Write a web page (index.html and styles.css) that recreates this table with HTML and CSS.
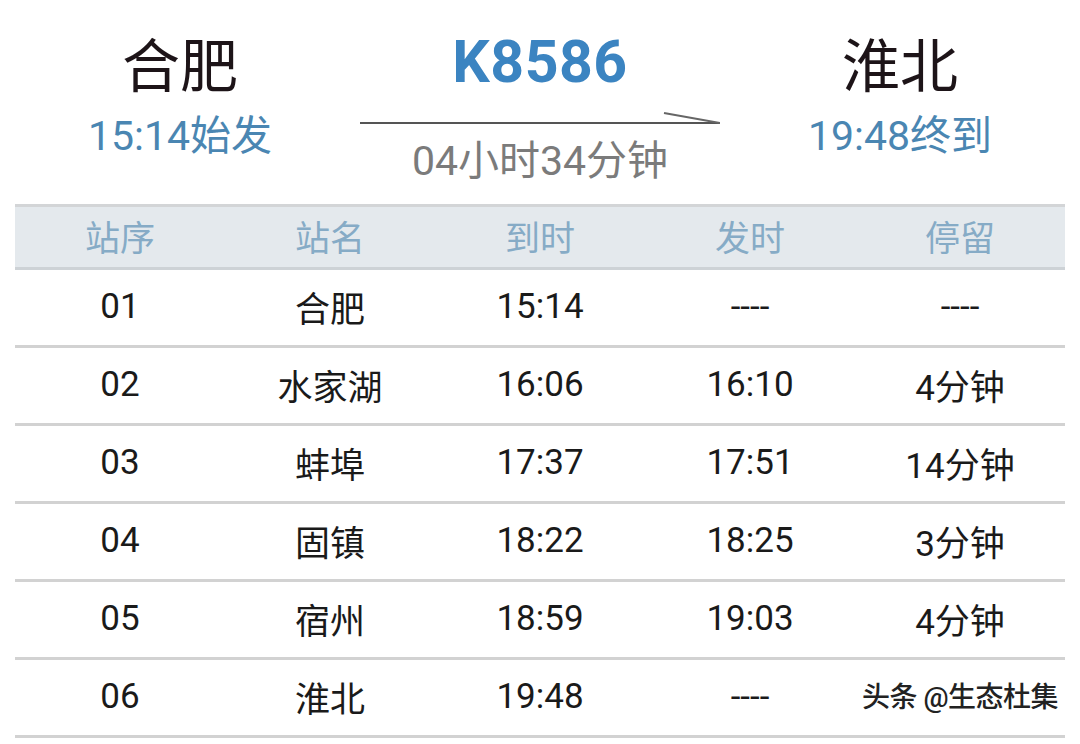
FILE: index.html
```html
<!DOCTYPE html>
<html lang="zh-CN">
<head>
<meta charset="utf-8">
<title>K8586</title>
<link rel="stylesheet" href="styles.css">
</head>
<body>
<div class="page">
  <div class="card">
    <div class="end">
      <div class="city">合肥</div>
      <div class="time">15:14始发</div>
    </div>
    <div class="mid">
      <div class="train">K8586</div>
      <svg class="arrow" width="360" height="14" viewBox="0 0 360 14">
        <line x1="0" y1="11" x2="360" y2="11" stroke="#555" stroke-width="2"/>
        <line x1="304" y1="1" x2="360" y2="11" stroke="#666" stroke-width="2"/>
      </svg>
      <div class="dur">04小时34分钟</div>
    </div>
    <div class="end">
      <div class="city">淮北</div>
      <div class="time">19:48终到</div>
    </div>
  </div>

  <div class="table">
    <div class="row head">
      <div>站序</div><div>站名</div><div>到时</div><div>发时</div><div>停留</div>
    </div>
    <div class="row">
      <div>01</div><div>合肥</div><div>15:14</div><div>----</div><div>----</div>
    </div>
    <div class="row">
      <div>02</div><div>水家湖</div><div>16:06</div><div>16:10</div><div>4分钟</div>
    </div>
    <div class="row">
      <div>03</div><div>蚌埠</div><div>17:37</div><div>17:51</div><div>14分钟</div>
    </div>
    <div class="row">
      <div>04</div><div>固镇</div><div>18:22</div><div>18:25</div><div>3分钟</div>
    </div>
    <div class="row">
      <div>05</div><div>宿州</div><div>18:59</div><div>19:03</div><div>4分钟</div>
    </div>
    <div class="row last">
      <div>06</div><div>淮北</div><div>19:48</div><div>----</div><div class="mark-cell"></div>
      <span class="watermark">头条 @生态杜集</span>
    </div>
  </div>
</div>
</body>
</html>
```

FILE: styles.css
```css
* { box-sizing: border-box; }
html, body {
  margin: 0;
  padding: 0;
  background: #ffffff;
}
body {
  width: 1080px;
  height: 744px;
  overflow: hidden;
  font-family: Roboto, "Noto Sans CJK SC", sans-serif;
}
.page {
  display: flex;
  flex-direction: column;
}
.card {
  height: 204px;
  display: grid;
  grid-template-columns: 360px 360px 360px;
  background: #fff;
  border-radius: 14px;
}
.end {
  display: flex;
  flex-direction: column;
  align-items: center;
  padding-top: 32px;
}
.city {
  font-size: 58px;
  line-height: 70px;
  color: #1d1418;
}
.time {
  font-size: 41px;
  line-height: 44px;
  color: #4a86b2;
  margin-top: 12px;
}
.mid {
  display: flex;
  flex-direction: column;
  align-items: center;
  padding-top: 28px;
}
.train {
  font-size: 59px;
  font-weight: 700;
  line-height: 68px;
  color: #3b84c1;
  letter-spacing: 0.5px;
}
.arrow {
  display: block;
  margin-top: 16px;
}
.dur {
  font-size: 41px;
  line-height: 46px;
  color: #7b7b7b;
  margin-top: 12px;
}
.table {
  margin: 0 15px;
  width: 1050px;
  border-top: 3px solid #d3d5d7;
}
.row {
  position: relative;
  display: grid;
  grid-template-columns: repeat(5, 210px);
  height: 78px;
  align-items: center;
  border-bottom: 3px solid #d2d2d2;
  font-size: 35px;
  color: #1a1a1a;
}
.row > div {
  text-align: center;
  padding-bottom: 3px;
}
.row.head {
  height: 63px;
  background: #e4e9ed;
  color: #86abc6;
  font-size: 35px;
  border-bottom-color: #cdd2d6;
}
.row.head > div {
  padding-bottom: 4px;
}
.watermark {
  position: absolute;
  right: 7px;
  top: 15px;
  font-size: 28px;
  font-weight: 500;
  color: #222;
  letter-spacing: -0.5px;
  text-shadow: 1px 1px 0 #fff, -1px -1px 0 #fff;
}
```
